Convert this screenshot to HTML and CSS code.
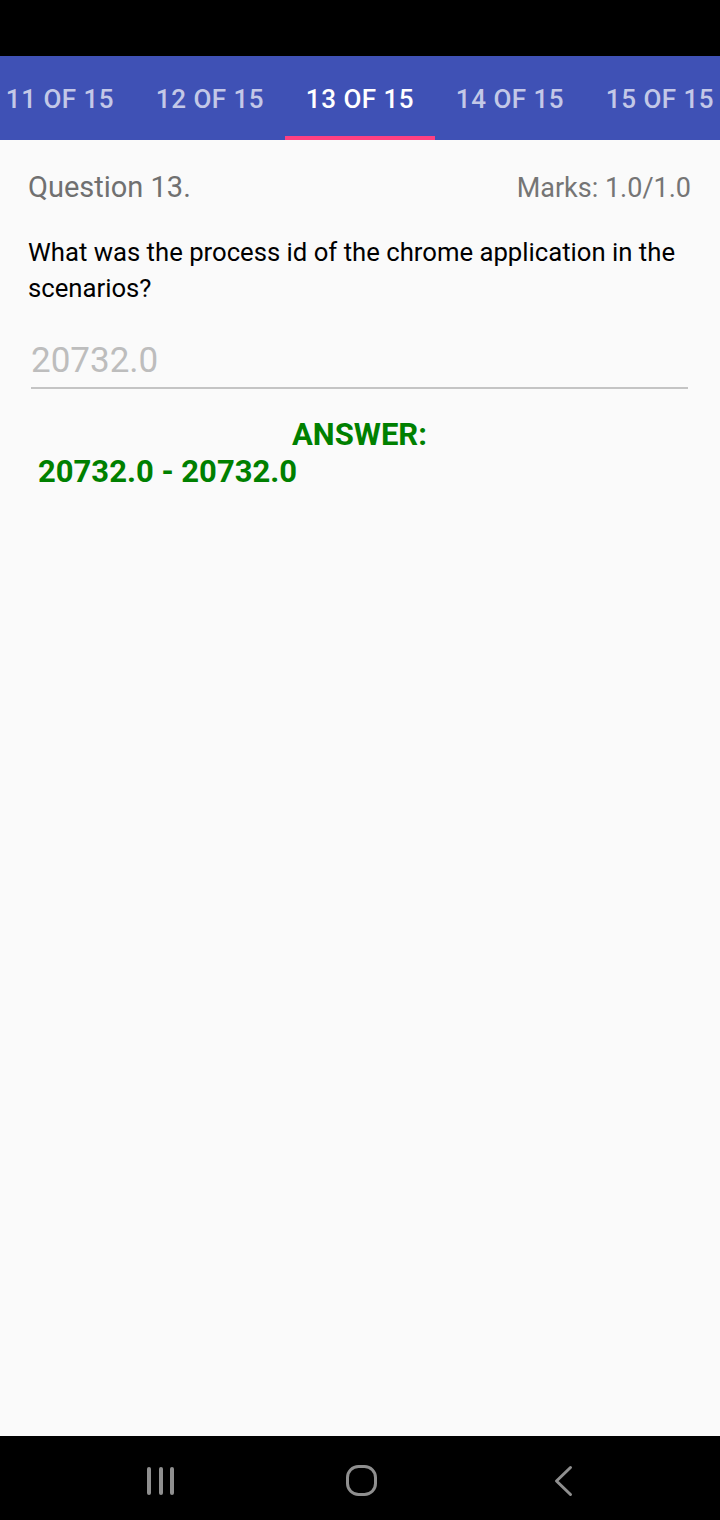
FILE: index.html
```html
<!DOCTYPE html>
<html>
<head>
<meta charset="utf-8">
<link rel="stylesheet" href="styles.css">
</head>
<body>
<div class="screen">
  <div class="status"></div>
  <div class="tabs">
    <div class="strip">
      <div class="tab">11 OF 15</div>
      <div class="tab">12 OF 15</div>
      <div class="tab active">13 OF 15</div>
      <div class="tab">14 OF 15</div>
      <div class="tab">15 OF 15</div>
    </div>
  </div>
  <main class="content">
    <div class="head">
      <span class="qnum">Question 13.</span>
      <span class="marks">Marks: 1.0/1.0</span>
    </div>
    <p class="question">What was the process id of the chrome application in the scenarios?</p>
    <div class="field">20732.0</div>
    <div class="answer-title">ANSWER:</div>
    <div class="answer">20732.0 - 20732.0</div>
  </main>
  <nav class="navbar">
    <svg class="nav-icon" width="40" height="40" viewBox="0 0 40 40">
      <rect x="7" y="7" width="4" height="28" rx="2" fill="#8f8f8f"/>
      <rect x="19" y="7" width="4" height="28" rx="2" fill="#8f8f8f"/>
      <rect x="30" y="7" width="4" height="28" rx="2" fill="#8f8f8f"/>
    </svg>
    <svg class="nav-icon" width="40" height="40" viewBox="0 0 40 40">
      <rect x="7.5" y="6.5" width="28" height="28" rx="11" fill="none" stroke="#8f8f8f" stroke-width="3"/>
    </svg>
    <svg class="nav-icon" width="40" height="40" viewBox="0 0 40 40">
      <path d="M30.5 7.5 L16.5 21 L30.5 34.5" fill="none" stroke="#8f8f8f" stroke-width="3" stroke-linecap="round" stroke-linejoin="round"/>
    </svg>
  </nav>
</div>
</body>
</html>
```
FILE: styles.css
```css
* { box-sizing: border-box; }
html, body { margin: 0; padding: 0; }
body {
  width: 720px;
  height: 1520px;
  font-family: Roboto, "Noto Sans", sans-serif;
  background: #fafafa;
  overflow: hidden;
}
.screen {
  width: 720px;
  height: 1520px;
  display: flex;
  flex-direction: column;
}
.status {
  height: 56px;
  background: #000;
  flex: none;
}
.tabs {
  height: 84px;
  background: #3f51b5;
  overflow: hidden;
  flex: none;
}
.strip {
  display: flex;
  margin-left: -15px;
  height: 100%;
}
.tab {
  flex: none;
  width: 150px;
  height: 100%;
  display: flex;
  align-items: center;
  justify-content: center;
  font-size: 26px;
  letter-spacing: 0.5px;
  font-weight: 500;
  color: rgba(255, 255, 255, 0.7);
  padding-top: 2px;
}
.tab.active {
  color: #fff;
  border-bottom: 4px solid #ff4081;
  padding-top: 6px;
}
.content {
  flex: 1;
  padding: 0 29px 0 28px;
  background: #fafafa;
}
.head {
  display: flex;
  justify-content: space-between;
  align-items: baseline;
  margin-top: 30px;
  height: 40px;
}
.qnum {
  font-size: 29px;
  color: #707070;
}
.marks {
  font-size: 27px;
  color: #757575;
}
.question {
  margin: 24px 0 0 0;
  font-size: 25.7px;
  line-height: 36px;
  color: #000;
}
.field {
  margin: 34px 3px 0 3px;
  font-size: 35px;
  color: #bdbdbd;
  line-height: 42px;
  padding-bottom: 5px;
  border-bottom: 2px solid #c4c4c4;
}
.answer-title {
  margin-top: 28px;
  text-align: center;
  font-size: 31px;
  font-weight: 700;
  color: #008000;
  line-height: 36px;
}
.answer {
  margin-top: 1px;
  padding-left: 10px;
  font-size: 31px;
  font-weight: 700;
  color: #008000;
  line-height: 36px;
}
.navbar {
  height: 84px;
  background: #000;
  flex: none;
  display: flex;
  align-items: center;
  gap: 160px;
  padding: 4px 0 0 140px;
}
.nav-icon { display: block; flex: none; }
```
